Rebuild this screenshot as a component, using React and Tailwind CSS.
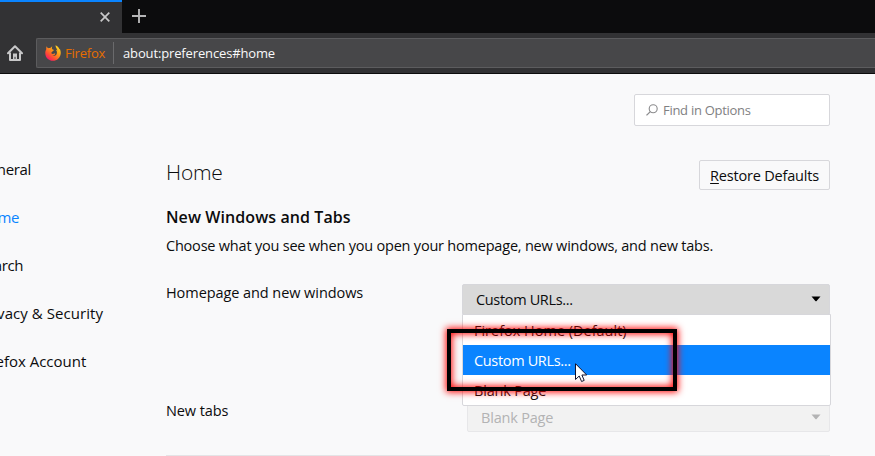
import React from "react";

const sidebarItems = [
  { label: "General", tracking: "tracking-[-0.3px]" },
  { label: "Home", tracking: "tracking-[-0.3px]", active: true },
  { label: "Search", tracking: "tracking-[-0.4px]" },
  { label: "Privacy & Security", tracking: "tracking-[0.060px]" },
  { label: "Firefox Account", tracking: "tracking-[-0.020px]" },
];

function FirefoxLogo() {
  return (
    <svg width="16" height="16" viewBox="0 0 16 16" className="shrink-0">
      <defs>
        <linearGradient id="flame" x1="0.9" y1="0.05" x2="0.2" y2="0.95">
          <stop offset="0" stopColor="#ffe226" />
          <stop offset="0.4" stopColor="#ff9a16" />
          <stop offset="0.75" stopColor="#ff4b35" />
          <stop offset="1" stopColor="#f5156c" />
        </linearGradient>
      </defs>
      <path
        fill="url(#flame)"
        d="M1.7 1.2C2 2.200 2.500 2.800 3.200 3.200C4 3 4.800 3.100 5.300 3.200C5.900 2.200 6.500 1.800 7.300 1.500C6.700 2.300 6.600 3.500 7.300 4.200C7.900 4.600 8.800 4.600 8.900 4.900C8.900 5.500 7.700 5.900 7.500 6.300C7.400 6.900 7.200 7.300 6.300 7.500C6.200 8.700 7.200 9.100 8.200 8.900C9.200 8.600 9.800 8.300 10.400 8.800C9.700 10.500 8.100 10.900 6.900 10.500C9.300 11.900 12.300 10 11.900 6.900C11.700 5.700 11.100 4.900 10.500 4.500C11.400 4.600 12.200 5.200 12.500 5.800C12.200 3.800 10.600 2.900 10.500 0.200C12.500 0.900 14.200 2.600 14.400 4.400L14.800 3.800C15.500 5.300 15.900 7 15.700 8.700C15.200 12.800 11.900 15.800 8 15.800C3.800 15.800 0.500 12.700 0.300 8.500C0.200 6.600 0.600 5.200 1.200 4.400C1.100 3.200 1.300 2 1.700 1.200Z"
      />
    </svg>
  );
}

function Caret({ className }) {
  return (
    <svg width="10" height="6" viewBox="0 0 10 6" className={className}>
      <path d="M0.500 0.500h9L5.600 5q-0.600 0.500-1.200 0z" fill="currentColor" />
    </svg>
  );
}

function TabStrip() {
  return (
    <div className="flex h-[33px] bg-[#0c0c0d]">
      <div className="flex w-[122px] items-center justify-end border-t-2 border-[#0a84ff] bg-[#323234] pr-[12px]">
        <svg width="10" height="10" viewBox="0 0 10 10" className="-mt-px">
          <path d="M0.700 0.700L9.300 9.300M9.300 0.700L0.700 9.300" stroke="#c8c8c9" strokeWidth="1.700" />
        </svg>
      </div>
      <svg width="14" height="14" viewBox="0 0 14 14" className="mt-[9px] ml-[10px]">
        <path d="M7 0v14M0 7h14" stroke="#b6b6b7" strokeWidth="1.900" />
      </svg>
    </div>
  );
}

function Toolbar() {
  return (
    <div className="flex h-[41px] items-start border-b border-[#0c0c0d] bg-[#323234] pt-[5px]">
      <svg width="16" height="16" viewBox="0 0 16 16" className="mt-[7px] ml-[7px] shrink-0" fill="none" stroke="#c8c8c9">
        <path d="M1 8.300L8 1.300L15 8.300" strokeWidth="2" strokeLinejoin="round" strokeLinecap="round" />
        <path d="M3 7.500V15H13V7.500" strokeWidth="2" strokeLinejoin="round" />
        <path d="M6 15V8.500H10V15Z" fill="#c8c8c9" stroke="none" />
        <path d="M8 11.800V14" stroke="#323234" strokeWidth="1" />
      </svg>
      <div className="ml-[13px] flex h-[30px] flex-1 items-center rounded-l-[2px] border border-r-0 border-[#5c5c5e] bg-[#474749] pl-[8px]">
        <FirefoxLogo />
        <span className="mt-[2px] ml-[4px] w-[44px] text-[13px] tracking-[-0.2px] whitespace-nowrap text-[#e66e00]">Firefox</span>
        <span className="ml-[4px] h-[22px] w-px bg-[#6a6a6c]" />
        <span className="mt-[2px] ml-[9px] text-[13px] tracking-[-0.14px] text-[#f9f9fa]">about:preferences#home</span>
      </div>
    </div>
  );
}

function HomepageSelect() {
  return (
    <div className="relative ml-auto h-[31px] w-[368px]">
      <div className="flex h-full items-center rounded-[2px] border border-[#d7d7db] bg-[#d9d9d9] pr-[8px] pl-[13px]">
        <span className="text-[14.500px] tracking-[-0.34px]">Custom URLs...</span>
        <Caret className="-mt-[2px] ml-auto text-black" />
      </div>
      <div className="absolute top-[30px] left-0 z-10 w-[369px] rounded-b-[2px] border border-[#d7d7db] bg-white text-[14.500px] leading-[32px]">
        <div className="h-[30px] pl-[11px] tracking-[-0.010px]">Firefox Home (Default)</div>
        <div className="h-[30px] bg-[#0a84ff] pl-[11px] tracking-[-0.34px] text-white">Custom URLs...</div>
        <div className="h-[30px] pl-[11px] tracking-[-0.2px]">Blank Page</div>
      </div>
      <div className="absolute top-[45px] left-[-15px] z-20 h-[62px] w-[230px] border-4 border-black shadow-[0_0_7px_1px_#ff0000,inset_0_0_7px_1px_#ff0000]" />
      <svg width="14" height="20" viewBox="0 0 14 20" className="absolute top-[79px] left-[113px] z-30">
        <path
          d="M0.500 0.700V16.500L4.200 13L6.600 18.500L9.200 17.400L6.900 12H11.700Z"
          fill="white"
          stroke="#10102c"
          strokeWidth="1"
        />
      </svg>
    </div>
  );
}

export default function App() {
  return (
    <div className="flex h-[456px] w-[875px] flex-col overflow-hidden bg-[#f9f9fa] font-['Open_Sans','Noto_Sans',sans-serif] text-[#0c0c0d]">
      <TabStrip />
      <Toolbar />
      <div className="flex min-h-0 flex-1">
        <nav className="-ml-[22px] flex w-[188px] shrink-0 flex-col pt-[71px]">
          {sidebarItems.map((item) => (
            <a
              key={item.label}
              className={`flex h-[48px] items-center text-[15px] whitespace-nowrap ${item.tracking} ${item.active ? "text-[#0a84ff]" : ""}`}
            >
              {item.label}
            </a>
          ))}
        </nav>
        <main className="flex w-[664px] flex-col pt-[20px]">
          <div className="ml-auto flex h-[32px] w-[196px] shrink-0 items-center rounded-[2px] border border-[#d7d7db] bg-white pl-[11px]">
            <svg width="12" height="12" viewBox="0 0 12 12" fill="none" stroke="#8a8a8c" className="-mt-px">
              <circle cx="7.200" cy="4.700" r="4" strokeWidth="1.100" />
              <path d="M4.300 7.600L0.500 11.400" strokeWidth="1.300" />
            </svg>
            <span className="mt-[2px] ml-[5px] text-[13px] tracking-[-0.28px] text-[#808082]">Find in Options</span>
          </div>
          <div className="mt-[34px] flex h-[30px] shrink-0 items-center justify-between">
            <h1 className="-mt-[5px] text-[21px] font-light tracking-[-0.2px]">Home</h1>
            <button className="h-[30px] w-[131px] rounded-[2px] border border-[#d7d7db] bg-[#f9f9fa] pt-[2px] text-[14.500px] tracking-[-0.2px] whitespace-nowrap">
              <span className="underline underline-offset-2">R</span>estore Defaults
            </button>
          </div>
          <h2 className="mt-[15px] h-[24px] shrink-0 text-[16px] leading-[24px] font-semibold tracking-[0.080px]">
            New Windows and Tabs
          </h2>
          <p className="mt-[5px] h-[24px] shrink-0 text-[14.500px] leading-[24px] tracking-[-0.21px] whitespace-nowrap">
            Choose what you see when you open your homepage, new windows, and new tabs.
          </p>
          <div className="mt-[26px] flex h-[31px] shrink-0">
            <span className="-mt-[3px] h-[24px] text-[14.500px] leading-[24px] tracking-[-0.070px] whitespace-nowrap">Homepage and new windows</span>
            <HomepageSelect />
          </div>
          <div className="mt-[86px] flex h-[31px] shrink-0">
            <span className="-mt-[2px] h-[24px] text-[14.500px] leading-[24px] tracking-[-0.1px]">New tabs</span>
            <div className="ml-auto flex h-[31px] w-[363px] items-center rounded-[2px] border border-[#e7e7e9] bg-[#f2f2f2] pr-[8px] pl-[13px] text-[#b3b3b4]">
              <span className="mt-[2px] text-[14.500px] tracking-[-0.2px]">Blank Page</span>
              <Caret className="ml-auto" />
            </div>
          </div>
          <div className="mt-[23px] h-px shrink-0 bg-[#e4e4e6]" />
        </main>
      </div>
    </div>
  );
}
